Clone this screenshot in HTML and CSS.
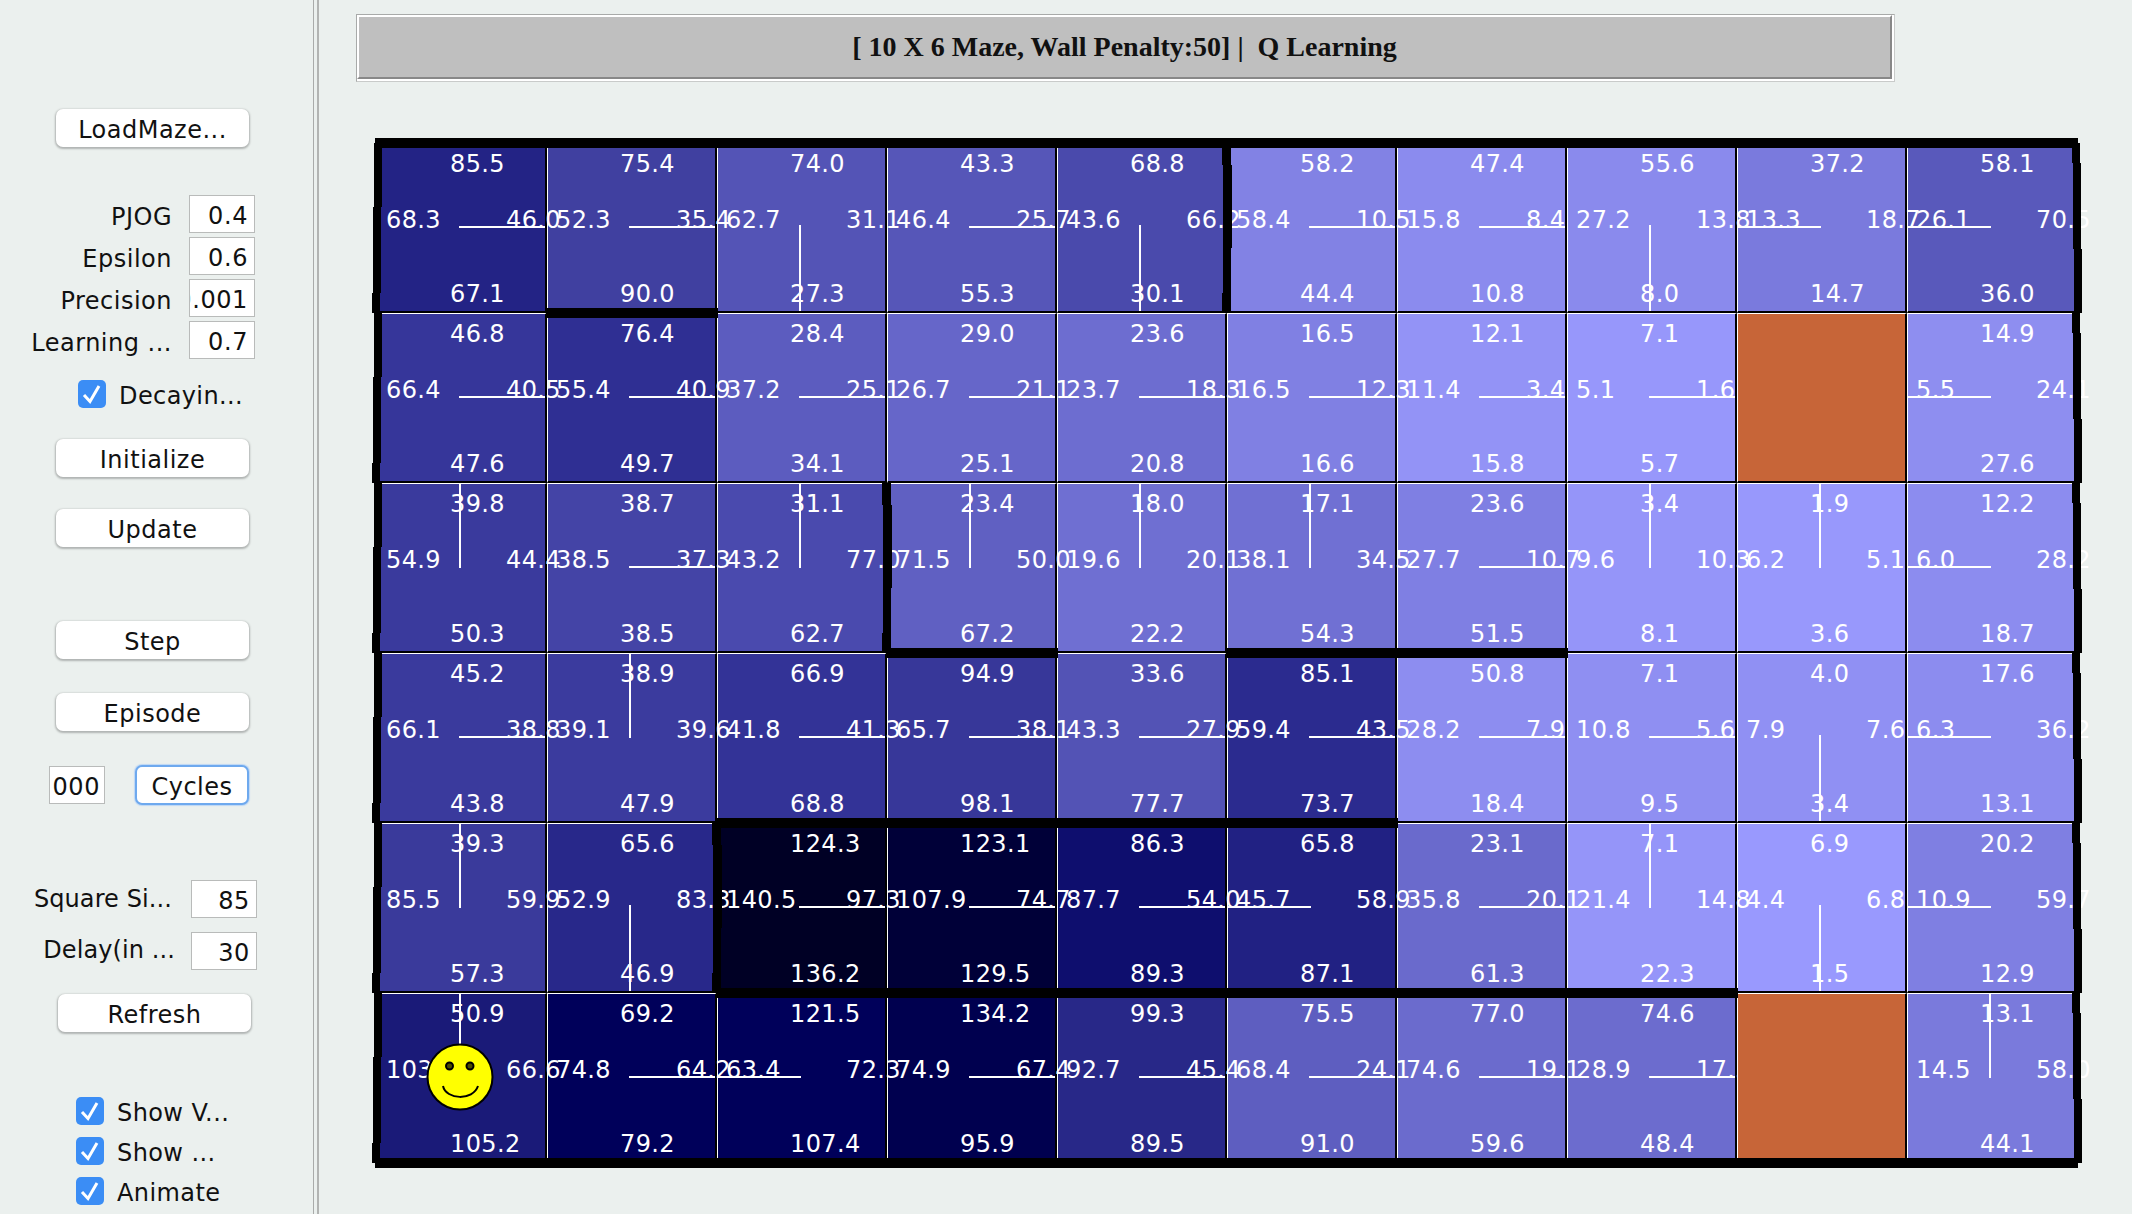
FILE: index.html
```html
<!DOCTYPE html>
<html lang="en">
<head>
<meta charset="UTF-8">
<meta name="viewport" content="width=device-width, initial-scale=1.0">
<title>Q Learning Maze</title>
<link rel="stylesheet" href="styles.css">
</head>
<body>
  <aside class="sidebar">
    <div class="btn load-btn">LoadMaze...</div>

    <div class="params">
      <div class="field-row"><label>PJOG</label><div class="field"><span>0.4</span></div></div>
      <div class="field-row"><label>Epsilon</label><div class="field"><span>0.6</span></div></div>
      <div class="field-row"><label>Precision</label><div class="field"><span>0.001</span></div></div>
      <div class="field-row"><label>Learning ...</label><div class="field"><span>0.7</span></div></div>
    </div>

    <div class="check decay-check">
      <svg class="tick" viewBox="0 0 28 28"><rect width="28" height="28" rx="5" fill="#3b8df5"/><path d="M6 15l6 6.5L21 6" fill="none" stroke="#fff" stroke-width="3"/></svg>
      <span>Decayin...</span>
    </div>

    <div class="btn init-btn">Initialize</div>
    <div class="btn update-btn">Update</div>
    <div class="btn step-btn">Step</div>
    <div class="btn episode-btn">Episode</div>

    <div class="cycles-row">
      <div class="field small"><span>000</span></div>
      <div class="btn cycles-btn">Cycles</div>
    </div>

    <div class="params lower">
      <div class="field-row"><label>Square Si...</label><div class="field"><span>85</span></div></div>
      <div class="field-row delay-row"><label>Delay(in ...</label><div class="field"><span>30</span></div></div>
    </div>

    <div class="btn refresh-btn">Refresh</div>

    <div class="checks">
      <div class="check">
        <svg class="tick" viewBox="0 0 28 28"><rect width="28" height="28" rx="5" fill="#3b8df5"/><path d="M6 15l6 6.5L21 6" fill="none" stroke="#fff" stroke-width="3"/></svg>
        <span>Show V...</span>
      </div>
      <div class="check">
        <svg class="tick" viewBox="0 0 28 28"><rect width="28" height="28" rx="5" fill="#3b8df5"/><path d="M6 15l6 6.5L21 6" fill="none" stroke="#fff" stroke-width="3"/></svg>
        <span>Show ...</span>
      </div>
      <div class="check">
        <svg class="tick" viewBox="0 0 28 28"><rect width="28" height="28" rx="5" fill="#3b8df5"/><path d="M6 15l6 6.5L21 6" fill="none" stroke="#fff" stroke-width="3"/></svg>
        <span>Animate</span>
      </div>
    </div>
  </aside>

  <main class="main">
    <div class="title-bar">
      <div class="title-edge">
        <div class="title-fill">[ 10 X 6 Maze, Wall Penalty:50] |  Q Learning</div>
      </div>
    </div>

    <div class="maze">
      <!-- row 0 -->
      <div class="cell to-e" style="background-color:#232385"><span class="n">85.5</span><span class="w">68.3</span><span class="e">46.0</span><span class="s">67.1</span></div>
      <div class="cell to-e" style="background-color:#4040a0"><span class="n">75.4</span><span class="w">52.3</span><span class="e">35.4</span><span class="s">90.0</span></div>
      <div class="cell to-s" style="background-color:#5454b6"><span class="n">74.0</span><span class="w">62.7</span><span class="e">31.1</span><span class="s">27.3</span></div>
      <div class="cell to-e" style="background-color:#5656b8"><span class="n">43.3</span><span class="w">46.4</span><span class="e">25.7</span><span class="s">55.3</span></div>
      <div class="cell to-s" style="background-color:#4a4aac"><span class="n">68.8</span><span class="w">43.6</span><span class="e">66.2</span><span class="s">30.1</span></div>
      <div class="cell to-e" style="background-color:#8282e4"><span class="n">58.2</span><span class="w">58.4</span><span class="e">10.5</span><span class="s">44.4</span></div>
      <div class="cell to-e" style="background-color:#8b8bee"><span class="n">47.4</span><span class="w">15.8</span><span class="e">8.4</span><span class="s">10.8</span></div>
      <div class="cell to-s" style="background-color:#8a8aed"><span class="n">55.6</span><span class="w">27.2</span><span class="e">13.8</span><span class="s">8.0</span></div>
      <div class="cell to-w" style="background-color:#7a7add"><span class="n">37.2</span><span class="w">13.3</span><span class="e">18.7</span><span class="s">14.7</span></div>
      <div class="cell to-w" style="background-color:#5959bb"><span class="n">58.1</span><span class="w">26.1</span><span class="e">70.5</span><span class="s">36.0</span></div>
      <!-- row 1 -->
      <div class="cell to-e" style="background-color:#36369a"><span class="n">46.8</span><span class="w">66.4</span><span class="e">40.5</span><span class="s">47.6</span></div>
      <div class="cell to-e" style="background-color:#2f2f93"><span class="n">76.4</span><span class="w">55.4</span><span class="e">40.9</span><span class="s">49.7</span></div>
      <div class="cell to-e" style="background-color:#5c5cbf"><span class="n">28.4</span><span class="w">37.2</span><span class="e">25.1</span><span class="s">34.1</span></div>
      <div class="cell to-e" style="background-color:#6666c9"><span class="n">29.0</span><span class="w">26.7</span><span class="e">21.1</span><span class="s">25.1</span></div>
      <div class="cell to-e" style="background-color:#6d6dd0"><span class="n">23.6</span><span class="w">23.7</span><span class="e">18.3</span><span class="s">20.8</span></div>
      <div class="cell to-e" style="background-color:#8080e3"><span class="n">16.5</span><span class="w">16.5</span><span class="e">12.3</span><span class="s">16.6</span></div>
      <div class="cell to-e" style="background-color:#9393f6"><span class="n">12.1</span><span class="w">11.4</span><span class="e">3.4</span><span class="s">15.8</span></div>
      <div class="cell to-e" style="background-color:#9797fb"><span class="n">7.1</span><span class="w">5.1</span><span class="e">1.6</span><span class="s">5.7</span></div>
      <div class="cell goal"></div>
      <div class="cell to-w" style="background-color:#8e8ef0"><span class="n">14.9</span><span class="w">5.5</span><span class="e">24.1</span><span class="s">27.6</span></div>
      <!-- row 2 -->
      <div class="cell to-n" style="background-color:#3a3a9d"><span class="n">39.8</span><span class="w">54.9</span><span class="e">44.4</span><span class="s">50.3</span></div>
      <div class="cell to-e" style="background-color:#4444a6"><span class="n">38.7</span><span class="w">38.5</span><span class="e">37.3</span><span class="s">38.5</span></div>
      <div class="cell to-n" style="background-color:#4a4aae"><span class="n">31.1</span><span class="w">43.2</span><span class="e">77.0</span><span class="s">62.7</span></div>
      <div class="cell to-n" style="background-color:#6060c2"><span class="n">23.4</span><span class="w">71.5</span><span class="e">50.0</span><span class="s">67.2</span></div>
      <div class="cell to-n" style="background-color:#6f6fd2"><span class="n">18.0</span><span class="w">19.6</span><span class="e">20.1</span><span class="s">22.2</span></div>
      <div class="cell to-n" style="background-color:#7070d3"><span class="n">17.1</span><span class="w">38.1</span><span class="e">34.5</span><span class="s">54.3</span></div>
      <div class="cell to-e" style="background-color:#7f7fe3"><span class="n">23.6</span><span class="w">27.7</span><span class="e">10.7</span><span class="s">51.5</span></div>
      <div class="cell to-n" style="background-color:#9595f9"><span class="n">3.4</span><span class="w">9.6</span><span class="e">10.3</span><span class="s">8.1</span></div>
      <div class="cell to-n" style="background-color:#9898fc"><span class="n">1.9</span><span class="w">6.2</span><span class="e">5.1</span><span class="s">3.6</span></div>
      <div class="cell to-w" style="background-color:#8c8cef"><span class="n">12.2</span><span class="w">6.0</span><span class="e">28.2</span><span class="s">18.7</span></div>
      <!-- row 3 -->
      <div class="cell to-e" style="background-color:#3a3a9d"><span class="n">45.2</span><span class="w">66.1</span><span class="e">38.8</span><span class="s">43.8</span></div>
      <div class="cell to-n" style="background-color:#3b3b9e"><span class="n">38.9</span><span class="w">39.1</span><span class="e">39.6</span><span class="s">47.9</span></div>
      <div class="cell to-e" style="background-color:#333397"><span class="n">66.9</span><span class="w">41.8</span><span class="e">41.3</span><span class="s">68.8</span></div>
      <div class="cell to-e" style="background-color:#373799"><span class="n">94.9</span><span class="w">65.7</span><span class="e">38.1</span><span class="s">98.1</span></div>
      <div class="cell to-e" style="background-color:#5353b5"><span class="n">33.6</span><span class="w">43.3</span><span class="e">27.9</span><span class="s">77.7</span></div>
      <div class="cell to-e" style="background-color:#2b2b8f"><span class="n">85.1</span><span class="w">59.4</span><span class="e">43.5</span><span class="s">73.7</span></div>
      <div class="cell to-e" style="background-color:#8d8df0"><span class="n">50.8</span><span class="w">28.2</span><span class="e">7.9</span><span class="s">18.4</span></div>
      <div class="cell to-e" style="background-color:#8f8ff2"><span class="n">7.1</span><span class="w">10.8</span><span class="e">5.6</span><span class="s">9.5</span></div>
      <div class="cell to-s" style="background-color:#9090f3"><span class="n">4.0</span><span class="w">7.9</span><span class="e">7.6</span><span class="s">3.4</span></div>
      <div class="cell to-w" style="background-color:#8c8cef"><span class="n">17.6</span><span class="w">6.3</span><span class="e">36.2</span><span class="s">13.1</span></div>
      <!-- row 4 -->
      <div class="cell to-n" style="background-color:#3a3a9b"><span class="n">39.3</span><span class="w">85.5</span><span class="e">59.9</span><span class="s">57.3</span></div>
      <div class="cell to-s" style="background-color:#28288a"><span class="n">65.6</span><span class="w">52.9</span><span class="e">83.3</span><span class="s">46.9</span></div>
      <div class="cell to-e" style="background-color:#000025"><span class="n">124.3</span><span class="w">140.5</span><span class="e">97.3</span><span class="s">136.2</span></div>
      <div class="cell to-e" style="background-color:#000038"><span class="n">123.1</span><span class="w">107.9</span><span class="e">74.7</span><span class="s">129.5</span></div>
      <div class="cell to-e" style="background-color:#0e0e6e"><span class="n">86.3</span><span class="w">87.7</span><span class="e">54.0</span><span class="s">89.3</span></div>
      <div class="cell to-w" style="background-color:#212183"><span class="n">65.8</span><span class="w">45.7</span><span class="e">58.9</span><span class="s">87.1</span></div>
      <div class="cell to-e" style="background-color:#6a6acc"><span class="n">23.1</span><span class="w">35.8</span><span class="e">20.1</span><span class="s">61.3</span></div>
      <div class="cell to-n" style="background-color:#9595f9"><span class="n">7.1</span><span class="w">21.4</span><span class="e">14.8</span><span class="s">22.3</span></div>
      <div class="cell to-s" style="background-color:#9999fe"><span class="n">6.9</span><span class="w">4.4</span><span class="e">6.8</span><span class="s">1.5</span></div>
      <div class="cell to-w" style="background-color:#7f7fe2"><span class="n">20.2</span><span class="w">10.9</span><span class="e">59.7</span><span class="s">12.9</span></div>
      <!-- row 5 -->
      <div class="cell to-n" style="background-color:#1a1a78"><span class="n">50.9</span><span class="w">103.4</span><span class="e">66.6</span><span class="s">105.2</span></div>
      <div class="cell to-e" style="background-color:#00005a"><span class="n">69.2</span><span class="w">74.8</span><span class="e">64.2</span><span class="s">79.2</span></div>
      <div class="cell to-w" style="background-color:#00005a"><span class="n">121.5</span><span class="w">63.4</span><span class="e">72.3</span><span class="s">107.4</span></div>
      <div class="cell to-e" style="background-color:#00004f"><span class="n">134.2</span><span class="w">74.9</span><span class="e">67.4</span><span class="s">95.9</span></div>
      <div class="cell to-e" style="background-color:#282888"><span class="n">99.3</span><span class="w">92.7</span><span class="e">45.4</span><span class="s">89.5</span></div>
      <div class="cell to-e" style="background-color:#5e5ec0"><span class="n">75.5</span><span class="w">68.4</span><span class="e">24.1</span><span class="s">91.0</span></div>
      <div class="cell to-e" style="background-color:#6b6bcd"><span class="n">77.0</span><span class="w">74.6</span><span class="e">19.1</span><span class="s">59.6</span></div>
      <div class="cell to-e" style="background-color:#6c6cce"><span class="n">74.6</span><span class="w">28.9</span><span class="e">17.5</span><span class="s">48.4</span></div>
      <div class="cell goal"></div>
      <div class="cell to-n" style="background-color:#7a7adc"><span class="n">13.1</span><span class="w">14.5</span><span class="e">58.0</span><span class="s">44.1</span></div>

      <!-- walls sit on top of the cells, placed by grid line -->
      <div class="walls">
        <div class="wall-top"></div>
        <div class="wall-bottom"></div>
        <div class="wall-left" style="grid-row:1"></div>
        <div class="wall-left" style="grid-row:2"></div>
        <div class="wall-left" style="grid-row:3"></div>
        <div class="wall-left" style="grid-row:4"></div>
        <div class="wall-left" style="grid-row:5"></div>
        <div class="wall-left" style="grid-row:6"></div>
        <div class="wall-right" style="grid-row:1"></div>
        <div class="wall-right" style="grid-row:2"></div>
        <div class="wall-right" style="grid-row:3"></div>
        <div class="wall-right" style="grid-row:4"></div>
        <div class="wall-right" style="grid-row:5"></div>
        <div class="wall-right" style="grid-row:6"></div>
        <div class="wall-v" style="grid-area:1/6"></div>
        <div class="wall-v" style="grid-area:3/4"></div>
        <div class="wall-v" style="grid-area:5/3"></div>
        <div class="wall-h" style="grid-area:2/2/2/3"></div>
        <div class="wall-h" style="grid-area:4/4/4/5"></div>
        <div class="wall-h" style="grid-area:4/6/4/8"></div>
        <div class="wall-h" style="grid-area:5/3/5/7"></div>
        <div class="wall-h" style="grid-area:6/3/6/9"></div>

        <svg class="smiley" viewBox="0 0 68 68">
          <circle cx="34" cy="34" r="32.5" fill="#ff0" stroke="#000" stroke-width="2"/>
          <circle cx="23.5" cy="23" r="3.5" fill="#4a4a00" stroke="#000" stroke-width="2"/>
          <circle cx="44" cy="23" r="3.5" fill="#4a4a00" stroke="#000" stroke-width="2"/>
          <path d="M17 43c3 14 30 15 35 0" fill="none" stroke="#000" stroke-width="2"/>
        </svg>
      </div>
    </div>
  </main>
</body>
</html>
```

FILE: styles.css
```css
* {
  box-sizing: border-box;
}

body {
  margin: 0;
  height: 1214px;
  overflow: hidden;
  display: flex;
  background-color: #ebf0ee;
  color: #111;
  font-family: "DejaVu Sans", sans-serif;
  font-size: 24px;
}

/* left control column */
.sidebar {
  width: 319px;
  flex: none;
  padding-top: 109px;
  border-right: 2px solid #b2b4b3;
  box-shadow: inset -3px 0 0 #ebf0ee, inset -4px 0 0 #a9abaa;
}

.btn {
  height: 38px;
  width: 193px;
  margin-left: 56px;
  padding-top: 3px;
  display: flex;
  align-items: center;
  justify-content: center;
  background: #fff;
  border-radius: 7px;
  box-shadow: 0 1px 2px 1px rgba(0, 0, 0, 0.25);
  letter-spacing: 0.5px;
}

.init-btn { margin-top: 31px; }
.update-btn { margin-top: 32px; }
.step-btn { margin-top: 74px; }
.episode-btn { margin-top: 34px; }
.refresh-btn { margin-top: 24px; margin-left: 58px; }

.params {
  margin-top: 48px;
  display: flex;
  flex-direction: column;
  gap: 4px;
}

.params.lower {
  margin-top: 75px;
  gap: 14px;
}

.field-row {
  width: 255px;
  height: 38px;
  display: flex;
  justify-content: flex-end;
  align-items: center;
  gap: 17px;
}

.field-row label {
  padding-top: 5px;
  white-space: nowrap;
  letter-spacing: 0.5px;
}

.lower .field-row {
  width: 257px;
  gap: 19px;
}

.lower label {
  letter-spacing: 0.1px;
  padding-top: 0;
}

.lower .delay-row {
  gap: 16px;
}

.lower .delay-row label {
  padding-bottom: 3px;
}

.field {
  width: 66px;
  height: 38px;
  flex: none;
  display: flex;
  justify-content: flex-end;
  align-items: center;
  overflow: hidden;
  padding: 3px 6px 0 0;
  background: #fff;
  border: 1px solid #b9bbba;
  white-space: nowrap;
  letter-spacing: 0.6px;
}

.field.small {
  width: 56px;
  padding-right: 4px;
}

.cycles-row {
  margin-top: 34px;
  margin-left: 49px;
  display: flex;
  align-items: center;
  gap: 30px;
}

.cycles-btn {
  width: 114px;
  height: 40px;
  margin-left: 0;
  border: 2px solid #6ea9ee;
  box-shadow: 0 0 1px 1px #bcd6f5;
}

.check {
  display: flex;
  align-items: center;
  gap: 13px;
  margin-left: 76px;
  height: 28px;
  letter-spacing: 0.4px;
}

.check span {
  padding-top: 4px;
}

.decay-check {
  margin-top: 21px;
  margin-left: 78px;
}

.checks {
  margin-top: 65px;
  display: flex;
  flex-direction: column;
  gap: 12px;
}

.tick {
  width: 28px;
  height: 28px;
  flex: none;
}

/* right side: title and maze */
.main {
  flex: 1;
  padding: 14px 0 0 37px;
}

.title-bar {
  width: 1539px;
  height: 68px;
  border: 1px solid;
  border-color: #a8aaa9 #c9cbca #c9cbca #a8aaa9;
}

.title-edge {
  height: 100%;
  border-right: 2px solid #fff;
  border-bottom: 2px solid #fff;
}

.title-fill {
  height: 100%;
  display: flex;
  align-items: center;
  justify-content: center;
  background: #bfbfbf;
  border: 2px solid;
  border-color: #fff #888 #888 #fff;
  font-family: "Liberation Serif", serif;
  font-weight: bold;
  font-size: 28px;
  white-space: pre;
  color: #111;
}

.maze {
  position: relative;
  width: 1700px;
  margin: 61px 0 0 21px;
  display: grid;
  grid-template-columns: repeat(10, 170px);
  grid-auto-rows: 170px;
}

.cell {
  display: grid;
  grid-template-columns: 64px 56px 1fr;
  grid-template-rows: 56px 74px 24px;
  padding: 8px 0 0 8px;
  border: solid #000;
  border-color: #fff #000 #000 #fff;
  border-width: 1px 2px 2px 1px;
  background-repeat: no-repeat;
  color: #fff;
  line-height: 24px;
  letter-spacing: 0.4px;
  white-space: nowrap;
}

/* values run over the neighbour cell, so they go above every cell fill */
.cell span {
  position: relative;
  z-index: 1;
}

.n { grid-area: 1 / 2; }
.w { grid-area: 2 / 1; }
.e { grid-area: 2 / 3; }
.s { grid-area: 3 / 2; }

/* policy line from the middle of the cell */
.to-e { background-image: linear-gradient(#fff, #fff); background-position: 81px 82px; background-size: 86px 2px; }
.to-w { background-image: linear-gradient(#fff, #fff); background-position: 0 82px; background-size: 83px 2px; }
.to-n { background-image: linear-gradient(#fff, #fff); background-position: 81px 0; background-size: 2px 84px; }
.to-s { background-image: linear-gradient(#fff, #fff); background-position: 81px 81px; background-size: 2px 86px; }

.goal {
  position: relative;
  z-index: 2;
  background-color: #c76538;
}

.walls {
  position: absolute;
  inset: 0;
  z-index: 3;
  display: grid;
  grid-template-columns: repeat(10, 170px);
  grid-template-rows: repeat(6, 170px);
  pointer-events: none;
}

.wall-top,
.wall-bottom,
.wall-h {
  height: 10px;
  margin-top: -5px;
  background: #000;
}

.wall-top {
  grid-area: 1 / 1 / 1 / 11;
  margin-left: -2px;
  margin-right: -1px;
}

.wall-bottom {
  grid-area: 6 / 1 / 6 / 11;
  align-self: end;
  margin-top: 0;
  margin-bottom: -5px;
  margin-left: -2px;
  margin-right: -1px;
}

.wall-h {
  margin-left: -1px;
  margin-right: -1px;
}

.wall-left,
.wall-right,
.wall-v {
  width: 10px;
  margin-left: -5px;
  background-image: linear-gradient(#000, #000), linear-gradient(#000, #000), linear-gradient(#000, #000), linear-gradient(#000, #000);
  background-repeat: no-repeat;
}

.wall-left {
  grid-column: 1;
  background-position: 2px 0, 1px 64px, 0 150px, 0 0;
  background-size: 8px 64px, 8px 86px, 8px 20px, 0 0;
}

.wall-right {
  grid-column: 10 / 11;
  justify-self: end;
  margin-left: 0;
  margin-right: -5px;
  background-position: 0 0, 1px 20px, 2px 106px, 0 0;
  background-size: 8px 20px, 8px 86px, 8px 64px, 0 0;
}

.wall-v {
  background-position: 0 0, 1px 22px, 1px 105px, 0 150px;
  background-size: 9px 22px, 9px 83px, 8px 45px, 9px 20px;
}

.smiley {
  grid-area: 6 / 1;
  width: 68px;
  height: 68px;
  margin: 50px 0 0 49px;
}
```
